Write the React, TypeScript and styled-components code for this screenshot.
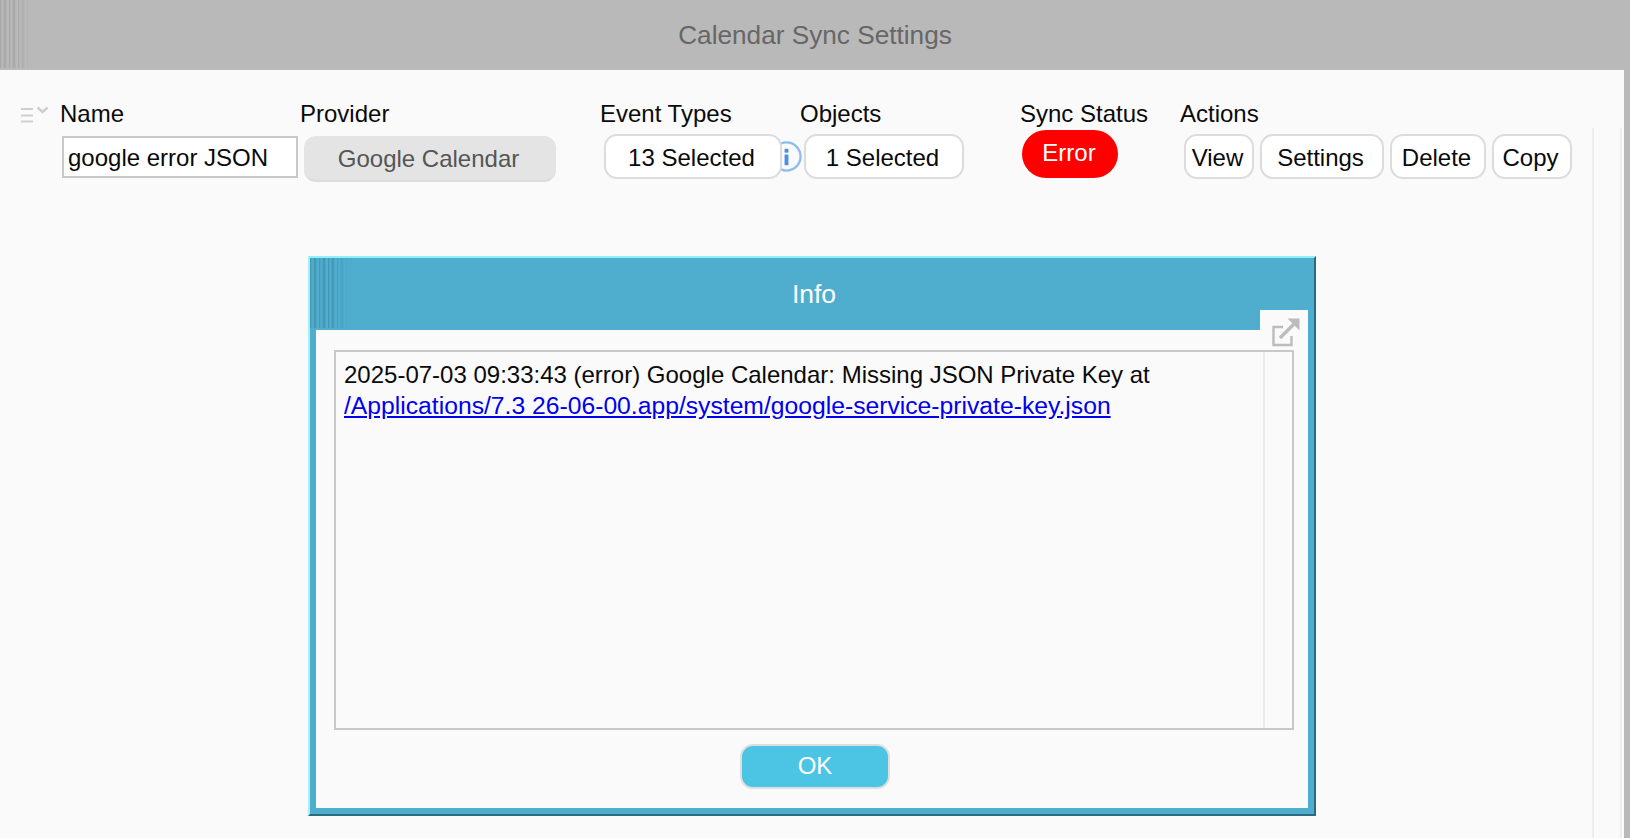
import React from "react";
import styled, { createGlobalStyle } from "styled-components";

const GlobalStyle = createGlobalStyle`
  html, body {
    margin: 0;
    padding: 0;
    height: 100%;
    overflow: hidden;
    background: #fafafa;
    color: #0a0a0a;
    font-family: "Liberation Sans", Arial, sans-serif;
    font-size: 24px;
  }
`;

const stripes = (tone: string) =>
  `repeating-linear-gradient(90deg, ${tone} 0, transparent 2px, transparent 3px, ${tone} 5px, transparent 7px, transparent 9px, ${tone} 9px)`;

const Page = styled.div`
  display: flex;
  flex-direction: column;
  height: 838px;
  border-right: 6px solid #b9b9b9;
  box-sizing: border-box;
  overflow: hidden;
`;

const TitleBar = styled.header`
  position: relative;
  flex: none;
  height: 70px;
  margin-right: -6px;
  background: #b9b9b9;
  color: #676767;
  display: flex;
  align-items: center;
  justify-content: center;
  font-size: 26.2px;

  &::before {
    content: "";
    position: absolute;
    left: 0;
    top: 0;
    bottom: 2px;
    width: 32px;
    background: ${stripes("rgba(130, 130, 130, 0.4)")};
    mask-image: linear-gradient(90deg, #000 50%, transparent);
  }
`;

const Body = styled.div`
  flex: 1;
  display: flex;
  min-height: 0;
`;

const Main = styled.main`
  flex: 1;
  min-width: 0;
`;

const Gutter = styled.div`
  flex: none;
  width: 26px;
  margin: 58px 2px 0 0;
  border-left: 2px solid #eeeeee;
  border-right: 2px solid #eeeeee;
`;

const Toolbar = styled.div`
  display: grid;
  grid-template-columns: 60px 240px 300px 200px 220px 160px 1fr;
  grid-template-rows: 28px auto;
  row-gap: 2px;
  padding-top: 30px;
`;

const SortCell = styled.div`
  grid-row: 1 / span 2;
  padding: 2px 0 0 21px;
`;

const ColumnLabel = styled.div`
  line-height: 28px;
  white-space: nowrap;
`;

const Cell = styled.div<{ $top: number; $left: number }>`
  position: relative;
  display: flex;
  padding-top: ${(p) => p.$top}px;
  padding-left: ${(p) => p.$left}px;
`;

const NameInput = styled.input`
  box-sizing: border-box;
  width: 236px;
  height: 42px;
  padding: 2px 0 0 4px;
  border: 2px solid #c8c8c8;
  background: #fff;
  color: #0a0a0a;
  font: inherit;
  outline: none;
`;

const ProviderBox = styled.div`
  box-sizing: border-box;
  width: 252px;
  height: 46px;
  padding: 2px 3px 0 0;
  display: flex;
  align-items: center;
  justify-content: center;
  background: #e4e4e4;
  border-bottom: 2px solid #dcdcdc;
  border-radius: 12px;
  color: #555;
`;

const PillButton = styled.button<{ $width: number }>`
  position: relative;
  z-index: 1;
  box-sizing: border-box;
  width: ${(p) => p.$width}px;
  height: 45px;
  padding: 2px 3px 0 0;
  background: #fff;
  border: 2px solid #dcdcdc;
  border-radius: 13px;
  color: #0a0a0a;
  font: inherit;
`;

const ActionRow = styled.div`
  display: flex;
  gap: 6px;
`;

const StatusPill = styled.div`
  width: 96px;
  height: 48px;
  border-radius: 24px;
  background: #ff0000;
  color: #fff;
  display: flex;
  align-items: center;
  justify-content: center;
  padding: 0 2px 2px 0;
  box-sizing: border-box;
`;

const InfoBadge = styled.svg`
  position: absolute;
  left: 171px;
  top: 11px;
  width: 31px;
  height: 31px;
`;

const Dialog = styled.section`
  position: relative;
  box-sizing: border-box;
  width: 1008px;
  margin: 74px 0 0 308px;
  border-style: solid;
  border-width: 2px;
  border-color: #8ef0f8 #2c6a80 #2c6a80 #a5f0f6;
  background: #4fadcd;
  padding: 0 6px 6px;
`;

const DialogTitle = styled.h2`
  position: relative;
  margin: 0 -6px;
  height: 72px;
  padding-left: 4px;
  box-sizing: border-box;
  display: flex;
  align-items: center;
  justify-content: center;
  color: #fff;
  font-size: 26.5px;
  font-weight: 400;

  &::before {
    content: "";
    position: absolute;
    left: 0;
    top: 0;
    bottom: 2px;
    width: 42px;
    background: ${stripes("rgba(55, 130, 155, 0.6)")};
    mask-image: linear-gradient(90deg, #000 50%, transparent);
  }
`;

const PopOutTab = styled.div`
  position: absolute;
  top: 52px;
  right: 6px;
  width: 48px;
  height: 20px;
  background: #fafafa;
`;

const PopOutIcon = styled.svg`
  position: absolute;
  left: 11px;
  top: 7px;
  width: 30px;
  height: 30px;
`;

const DialogBody = styled.div`
  background: #fafafa;
  padding: 20px 14px 19px 18px;
`;

const MessageBox = styled.div`
  box-sizing: border-box;
  height: 380px;
  display: flex;
  border: 2px solid #c8c8c8;
`;

const MessageText = styled.div`
  flex: 1;
  padding: 7px 8px;
  line-height: 31px;
  font-size: 24px;
`;

const MessageLink = styled.a`
  color: #0000ee;
  font-size: 24.7px;
  text-decoration: underline;
`;

const ScrollTrack = styled.div`
  flex: none;
  width: 29px;
  box-sizing: border-box;
  border-left: 2px solid #ebebeb;
`;

const DialogFooter = styled.div`
  display: flex;
  justify-content: center;
  padding: 14px 0 0 2px;
`;

const OkButton = styled.button`
  box-sizing: border-box;
  width: 150px;
  height: 45px;
  padding: 0 0 2px;
  background: #4bc5e3;
  border: 2px solid #dedede;
  border-radius: 13px;
  color: #fff;
  font: inherit;
`;

const SortIcon = () => (
  <svg width="28" height="18" viewBox="0 0 28 18" fill="none" stroke="#cfcfcf" strokeWidth="2">
    <path d="M0 3h12M0 9.5h12M0 15.5h12" />
    <path d="M16.5 1.5l5 4.5 5-4.5" strokeWidth="2.6" />
  </svg>
);

const actions = [
  { label: "View", width: 70 },
  { label: "Settings", width: 124 },
  { label: "Delete", width: 96 },
  { label: "Copy", width: 80 },
];

export default function App() {
  return (
    <Page>
      <GlobalStyle />
      <TitleBar>Calendar Sync Settings</TitleBar>
      <Body>
        <Main>
          <Toolbar>
            <SortCell>
              <SortIcon />
            </SortCell>
            <ColumnLabel>Name</ColumnLabel>
            <ColumnLabel>Provider</ColumnLabel>
            <ColumnLabel>Event Types</ColumnLabel>
            <ColumnLabel>Objects</ColumnLabel>
            <ColumnLabel>Sync Status</ColumnLabel>
            <ColumnLabel>Actions</ColumnLabel>
            <Cell $top={6} $left={2}>
              <NameInput readOnly value="google error JSON" />
            </Cell>
            <Cell $top={6} $left={4}>
              <ProviderBox>Google Calendar</ProviderBox>
            </Cell>
            <Cell $top={4} $left={4}>
              <InfoBadge viewBox="0 0 32 32" fill="none">
                <circle cx="16" cy="16" r="14.5" stroke="#8dbcf0" strokeWidth="2.4" />
                <rect x="14" y="8" width="4" height="4" rx="1" fill="#4a90e2" />
                <rect x="14" y="14" width="4" height="11" fill="#4a90e2" />
              </InfoBadge>
              <PillButton $width={178}>13 Selected</PillButton>
            </Cell>
            <Cell $top={4} $left={4}>
              <PillButton $width={160}>1 Selected</PillButton>
            </Cell>
            <Cell $top={0} $left={2}>
              <StatusPill>Error</StatusPill>
            </Cell>
            <Cell $top={4} $left={4}>
              <ActionRow>
                {actions.map((action) => (
                  <PillButton key={action.label} $width={action.width}>
                    {action.label}
                  </PillButton>
                ))}
              </ActionRow>
            </Cell>
          </Toolbar>

          <Dialog>
            <DialogTitle>Info</DialogTitle>
            <PopOutTab>
              <PopOutIcon viewBox="0 0 30 30" fill="none" stroke="#bcbcbc" strokeWidth="2.4">
                <path d="M12 10H2.5v18h18v-9" />
                <path d="M9 21L24 6" strokeWidth="3.4" />
                <path d="M16.5 1.5h12v12z" fill="#bcbcbc" stroke="none" />
              </PopOutIcon>
            </PopOutTab>
            <DialogBody>
              <MessageBox>
                <MessageText>
                  2025-07-03 09:33:43 (error) Google Calendar: Missing JSON Private Key at{" "}
                  <MessageLink href="#">/Applications/7.3 26-06-00.app/system/google-service-private-key.json</MessageLink>
                </MessageText>
                <ScrollTrack />
              </MessageBox>
              <DialogFooter>
                <OkButton>OK</OkButton>
              </DialogFooter>
            </DialogBody>
          </Dialog>
        </Main>
        <Gutter />
      </Body>
    </Page>
  );
}
